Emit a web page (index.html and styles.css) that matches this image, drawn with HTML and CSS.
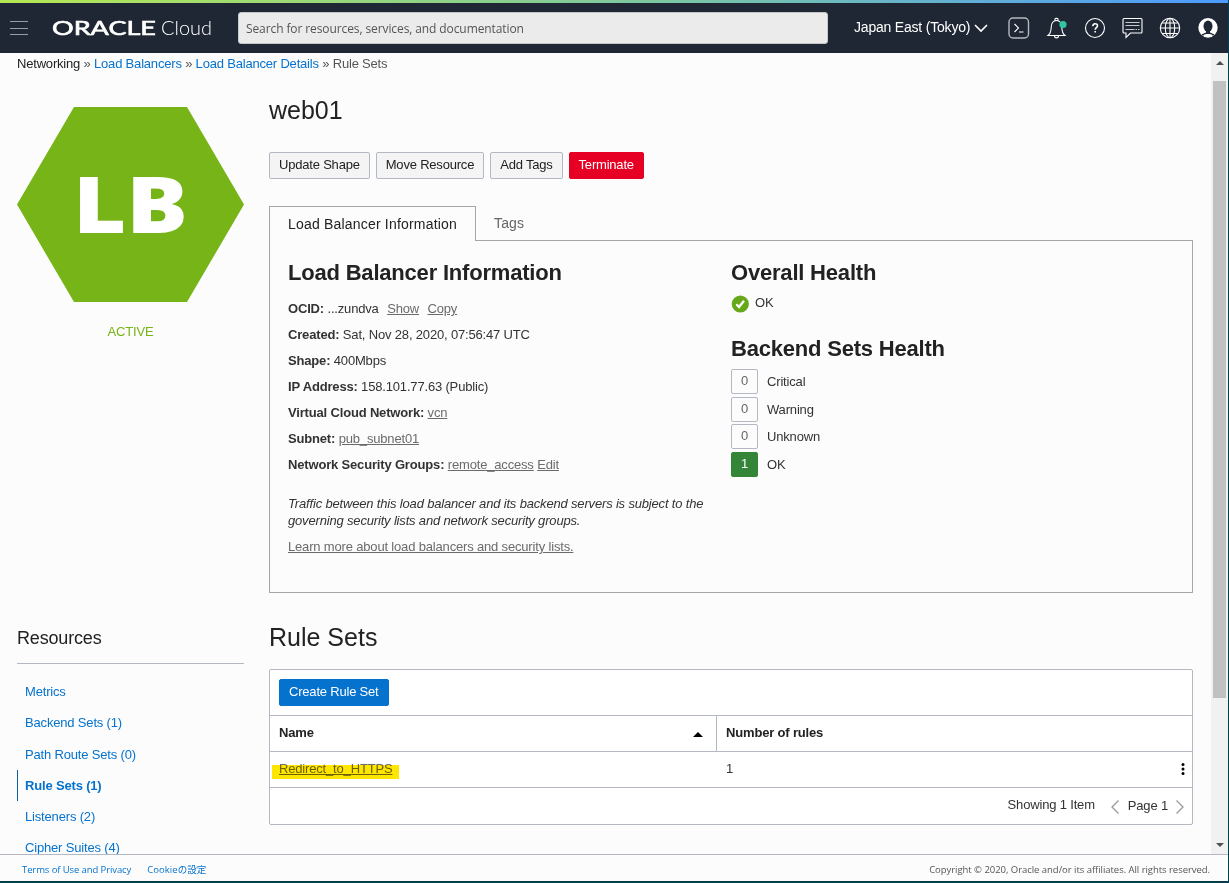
FILE: index.html
```html
<!DOCTYPE html>
<html lang="en">
<head>
    <meta charset="utf-8">
    <title>Rule Sets - Oracle Cloud</title>
    <link rel="stylesheet" href="styles.css">
</head>
<body>
<div class="app">
    <div class="stripe"></div>
    <header class="header">
        <div class="menu"><i></i><i></i><i></i></div>
        <svg class="logo" width="160" height="24" viewBox="0 0 160 24">
            <text class="logo-oracle" x="-1" y="19" textLength="104" lengthAdjust="spacingAndGlyphs">ORACLE</text>
            <text class="logo-cloud" x="108" y="19" textLength="51" lengthAdjust="spacingAndGlyphs">Cloud</text>
        </svg>
        <div class="search">Search for resources, services, and documentation</div>
        <div class="region"><span>Japan East (Tokyo)</span>
            <svg width="14" height="10" viewBox="0 0 14 10"><path d="M1 2l6 6 6-6"/></svg>
        </div>
        <nav class="tools">
            <svg width="22" height="22" viewBox="0 0 22 22">
                <rect class="frame" x="1" y="1" width="19.500" height="20" rx="4"/>
                <path d="M6.500 7l4 4-4 4M11 15h4.500"/>
            </svg>
            <svg width="22" height="22" viewBox="0 0 22 22">
                <path d="M2 18.500c2-1.500 3-3.500 3.200-8 .2-4.500 2-7 5.300-7s5.100 2.500 5.300 7c.2 4.500 1.200 6.500 3.200 8zM9 3.500v-1.500c0-1 3-1 3 0v1.500M8.500 19c0 2.500 4 2.500 4 0"/>
                <circle class="dot" cx="17" cy="7.500" r="3.600"/>
            </svg>
            <svg width="22" height="22" viewBox="0 0 22 22">
                <circle cx="11" cy="11" r="9.500"/>
                <path class="bold" d="M8.800 9.200c0-3.200 4.700-3.200 4.700-.400 0 1.900-2.300 1.900-2.300 4M11.200 14v1.600"/>
            </svg>
            <svg width="22" height="22" viewBox="0 0 22 22">
                <path d="M3 1.500h17q1 0 1 1v12.500q0 1-1 1H9.500l-4.500 4.500v-4.500H3q-1 0-1-1v-12.500q0-1 1-1z"/>
                <path class="soft" d="M4.500 5.500h14M4.500 8.500h14M4.500 12.500h9M14.500 12.500h1.500M17 12.500h1.500"/>
            </svg>
            <svg width="22" height="22" viewBox="0 0 22 22">
                <circle cx="11" cy="11" r="9.700"/>
                <ellipse cx="11" cy="11" rx="4.700" ry="9.700"/>
                <path d="M11 1.500v19M1.500 11h19M3.200 6h15.600M3.200 16.500h15.600"/>
            </svg>
            <svg width="22" height="22" viewBox="0 0 22 22">
                <circle class="white" cx="11" cy="10.800" r="9.700"/>
                <ellipse class="hole" cx="11" cy="9.200" rx="4.500" ry="5.600"/>
                <path class="hole" d="M9 13h4v2.500l4.500 2-1.500 1.500H6l-1.500-1.500 4.500-2z"/>
                <path class="white" d="M6 18.500c1.500-1.200 3-1.500 5-1.500s3.500.3 5 1.500c-2.500 2.500-7.500 2.500-10 0z"/>
            </svg>
        </nav>
    </header>

    <div class="body">
        <div class="content">
            <div class="breadcrumb"><b>Networking</b> » <a>Load Balancers</a> » <a>Load Balancer Details</a> » Rule Sets</div>
            <div class="columns">
                <aside class="sidebar">
                    <svg class="hexagon" width="227" height="195" viewBox="0 0 227 195">
                        <polygon points="57,0 170,0 227,97.500 170,195 57,195 0,97.500"/>
                        <text x="56" y="126" textLength="115" lengthAdjust="spacingAndGlyphs">LB</text>
                    </svg>
                    <div class="state">ACTIVE</div>
                    <h3>Resources</h3>
                    <ul class="resources">
                        <li>Metrics</li>
                        <li>Backend Sets (1)</li>
                        <li>Path Route Sets (0)</li>
                        <li class="current">Rule Sets (1)</li>
                        <li>Listeners (2)</li>
                        <li>Cipher Suites (4)</li>
                    </ul>
                </aside>

                <main class="main">
                    <h1>web01</h1>
                    <div class="actions">
                        <button class="btn">Update Shape</button>
                        <button class="btn">Move Resource</button>
                        <button class="btn">Add Tags</button>
                        <button class="btn danger">Terminate</button>
                    </div>
                    <div class="tabs">
                        <div class="tab active">Load Balancer Information</div>
                        <div class="tab">Tags</div>
                    </div>
                    <div class="panel">
                        <section class="info">
                            <h2>Load Balancer Information</h2>
                            <p class="ocid"><b>OCID:</b> <span>...zundva</span> <a>Show</a> <a>Copy</a></p>
                            <p><b>Created:</b> Sat, Nov 28, 2020, 07:56:47 UTC</p>
                            <p><b>Shape:</b> 400Mbps</p>
                            <p><b>IP Address:</b> 158.101.77.63 (Public)</p>
                            <p><b>Virtual Cloud Network:</b> <a>vcn</a></p>
                            <p><b>Subnet:</b> <a>pub_subnet01</a></p>
                            <p><b>Network Security Groups:</b> <a>remote_access</a> <a>Edit</a></p>
                            <div class="note">Traffic between this load balancer and its backend servers is subject to the<br>governing security lists and network security groups.</div>
                            <div class="learn"><a>Learn more about load balancers and security lists.</a></div>
                        </section>
                        <section class="health">
                            <h2>Overall Health</h2>
                            <div class="overall">
                                <svg width="18" height="18" viewBox="0 0 18 18"><circle cx="9.300" cy="9" r="8.600"/><path d="M5.300 9.300l2.700 2.700 5-6.200"/></svg>
                                <span>OK</span>
                            </div>
                            <h2>Backend Sets Health</h2>
                            <ul class="counts">
                                <li><i>0</i>Critical</li>
                                <li><i>0</i>Warning</li>
                                <li><i>0</i>Unknown</li>
                                <li><i class="ok">1</i>OK</li>
                            </ul>
                        </section>
                    </div>

                    <h1 class="list-title">Rule Sets</h1>
                    <div class="table">
                        <div class="toolbar"><button class="btn primary">Create Rule Set</button></div>
                        <div class="row head">
                            <div class="cell">Name <i class="sort"></i></div>
                            <div class="cell">Number of rules</div>
                        </div>
                        <div class="row">
                            <div class="cell"><a class="marked">Redirect_to_HTTPS</a></div>
                            <div class="cell">1
                                <svg width="4" height="14" viewBox="0 0 4 14"><circle cx="2" cy="2.500" r="1.500"/><circle cx="2" cy="7" r="1.500"/><circle cx="2" cy="11.500" r="1.500"/></svg>
                            </div>
                        </div>
                        <div class="pager">
                            <span class="showing">Showing 1 Item</span>
                            <svg width="8" height="14" viewBox="0 0 8 14"><path d="M7.500.500L1 7l6.500 6.500"/></svg>
                            <span class="page">Page 1</span>
                            <svg width="8" height="14" viewBox="0 0 8 14"><path d="M.500.500L7 7 .500 13.500"/></svg>
                        </div>
                    </div>
                </main>
            </div>
        </div>
        <div class="scrollbar">
            <i class="up"></i>
            <div class="thumb"></div>
            <i class="down"></i>
        </div>
    </div>

    <footer class="footer">
        <a>Terms of Use and Privacy</a>
        <a class="cookie">Cookieの設定</a>
        <span class="copyright">Copyright © 2020, Oracle and/or its affiliates. All rights reserved.</span>
    </footer>
</div>
</body>
</html>
```

FILE: styles.css
```css
* {
    box-sizing: border-box;
}

body {
    margin: 0;
    background: #043f4b;
    font: 13px/20px "Liberation Sans", Arial, sans-serif;
    letter-spacing: -.17px;
    color: #333;
}

h1, h2, h3, p, ul {
    margin: 0;
    padding: 0;
    list-style: none;
}

i {
    font-style: normal;
}

svg {
    display: block;
    flex: none;
}

.app {
    width: 1228px;
    height: 881px;
    overflow: hidden;
    display: flex;
    flex-direction: column;
    background: #fcfcfc;
}

.stripe {
    height: 3px;
    flex: none;
    background: linear-gradient(to right, #b5e853, #7bc6a4 55%, #4c9aff);
}

/* header */
.header {
    height: 50px;
    flex: none;
    display: flex;
    align-items: center;
    padding-left: 10px;
    background: #1e2733;
    color: #fff;
}

.menu {
    width: 18px;
    height: 14px;
    margin-right: 25px;
    display: flex;
    flex-direction: column;
    justify-content: space-between;
}

.menu i {
    height: 1px;
    background: #989b9f;
}

.logo {
    fill: #fff;
    overflow: visible;
    letter-spacing: 0;
}

.logo-oracle {
    font: 400 18.5px Lato, sans-serif;
    stroke: #fff;
    stroke-width: .6;
}

.logo-cloud {
    font: 300 20px Lato, sans-serif;
}

.search {
    width: 590px;
    height: 32px;
    margin-left: 25px;
    padding-left: 7px;
    border: 1px solid #c4c8cc;
    border-radius: 3px;
    background: #ebebeb;
    color: #555;
    font: 12px/31px "Open Sans", sans-serif;
    letter-spacing: -.1px;
}

.region {
    display: flex;
    align-items: center;
    gap: 4px;
    width: 134px;
    margin-left: 26px;
    font-size: 14px;
    letter-spacing: -.2px;
    white-space: nowrap;
}

.region span {
    margin-top: -2px;
}

.region svg, .tools svg {
    fill: none;
    stroke: #fff;
    stroke-width: 1.1;
}

.region svg {
    stroke-width: 1.6;
}

.tools {
    display: flex;
    gap: 15.8px;
    margin-left: 20px;
}

.tools .frame {
    stroke: #b6b9bd;
    stroke-width: 1.4;
}

.tools .bold {
    stroke-width: 1.6;
}

.tools .soft {
    stroke: #c6c9cd;
}

.tools .dot {
    fill: #30c5a0;
    stroke: none;
}

.tools .white {
    fill: #fff;
    stroke: none;
}

.tools .hole {
    fill: #1e2733;
    stroke: none;
}

/* page body */
.body {
    height: 801px;
    flex: none;
    display: flex;
}

.content {
    width: 1211px;
    overflow: hidden;
}

.scrollbar {
    width: 17px;
    padding: 8px 2px 7px;
    display: flex;
    flex-direction: column;
    align-items: center;
    background: #f1f1f1;
}

.scrollbar i {
    border: 4px solid transparent;
}

.scrollbar .up {
    border-top: 0;
    border-bottom-color: #505050;
}

.scrollbar .down {
    margin-top: auto;
    border-bottom: 0;
    border-top-color: #505050;
}

.thumb {
    width: 13px;
    height: 617px;
    margin-top: 16px;
    background: #c1c1c1;
}

.breadcrumb {
    height: 20px;
    padding-left: 17px;
    line-height: 22px;
    letter-spacing: -.19px;
    color: #555;
}

.breadcrumb b {
    font-weight: normal;
    color: #222;
}

.breadcrumb a, .footer a, .resources {
    color: #0572ce;
}

.columns {
    display: flex;
    gap: 25px;
    padding-left: 17px;
}

/* sidebar */
.sidebar {
    width: 227px;
}

.hexagon {
    margin-top: 34px;
    fill: #76b417;
}

.hexagon text {
    fill: #fff;
    font: 900 78px "Open Sans", sans-serif;
    letter-spacing: 0;
}

.state {
    margin-top: 20px;
    text-align: center;
    color: #76b417;
}

.sidebar h3 {
    margin-top: 284px;
    padding-bottom: 13px;
    border-bottom: 1px solid #b3b8c2;
    font-size: 18px;
    font-weight: normal;
    line-height: 24px;
    color: #222;
}

.resources {
    padding-top: 12px;
}

.resources li {
    height: 31.3px;
    padding-left: 8px;
    line-height: 31px;
}

.resources .current {
    padding-left: 7px;
    border-left: 1px solid #0f5fa6;
    font-weight: bold;
}

/* main column */
.main {
    width: 924px;
    padding-top: 22px;
}

.main h1 {
    font-size: 25px;
    font-weight: normal;
    line-height: 30px;
    letter-spacing: 0;
    color: #222;
}

.actions {
    display: flex;
    gap: 6px;
    margin-top: 27px;
}

.btn {
    height: 27px;
    padding: 0 9px 2px;
    border: 1px solid #b3b8c2;
    border-radius: 2px;
    background: #f4f4f4;
    font: 13px/22px "Liberation Sans", Arial, sans-serif;
    letter-spacing: -.2px;
    color: #222;
    white-space: nowrap;
}

.btn.danger {
    border-color: #e60023;
    background: #e60023;
    color: #fff;
}

.btn.primary {
    border-color: #0572ce;
    background: #0572ce;
    color: #fff;
}

.tabs {
    display: flex;
    height: 34px;
    margin-top: 27px;
    font-size: 14px;
    line-height: 34px;
    letter-spacing: .15px;
}

.tab {
    padding: 0 18px;
    color: #666;
}

.tab.active {
    width: 207px;
    height: 35px;
    position: relative;
    border: 1px solid #a6a6a6;
    border-bottom: 0;
    background: #fcfcfc;
    color: #222;
    letter-spacing: .19px;
    white-space: nowrap;
}

.panel {
    height: 353px;
    display: flex;
    padding: 18px 18px 0;
    border: 1px solid #a6a6a6;
}

.panel h2 {
    font-size: 22px;
    line-height: 28px;
    letter-spacing: -.2px;
    color: #222;
}

.panel a, .row a {
    color: #6b6b6b;
    text-decoration: underline;
}

.info {
    width: 443px;
}

.info p {
    line-height: 26px;
}

.info .ocid {
    margin-top: 9px;
}

.ocid a {
    margin-left: 5px;
}

.note {
    margin-top: 17px;
    font-style: italic;
    line-height: 17px;
    white-space: nowrap;
}

.learn {
    margin-top: 9px;
    line-height: 17px;
}

.overall {
    display: flex;
    align-items: center;
    gap: 6px;
    height: 18px;
    margin: 8px 0 22px;
}

.overall span {
    margin-top: -2px;
}

.overall svg {
    fill: #67a81a;
}

.overall path {
    fill: none;
    stroke: #fff;
    stroke-width: 2.2;
}

.counts {
    margin-top: 6px;
}

.counts li {
    display: flex;
    height: 27.7px;
    line-height: 25px;
}

.counts i {
    width: 27px;
    height: 25px;
    margin-right: 9px;
    border: 1px solid #b3b8c2;
    border-radius: 2px;
    line-height: 22px;
    text-align: center;
    color: #666;
}

.counts .ok {
    border-color: #348537;
    background: #348537;
    color: #fff;
}

/* rule set table */
.main .list-title {
    margin-top: 29px;
}

.table {
    height: 156px;
    margin-top: 17px;
    border: 1px solid #b3b8c2;
    border-radius: 2px;
    background: #fff;
}

.toolbar {
    height: 46px;
    padding: 9px;
    border-bottom: 1px solid #b3b8c2;
}

.row {
    display: flex;
    height: 36px;
    border-bottom: 1px solid #b3b8c2;
    line-height: 34px;
}

.row .cell {
    display: flex;
    width: 446px;
    padding: 0 9px;
}

.row .cell + .cell {
    width: 476px;
    padding-left: 10px;
}

.head {
    font-weight: bold;
    color: #222;
}

.head .cell + .cell {
    padding-left: 9px;
    border-left: 1px solid #b3b8c2;
}

.sort {
    align-self: center;
    margin: 1px 4px 0 auto;
    border: 4px solid transparent;
    border-width: 0 5px 5px;
    border-bottom-color: #000;
}

.row svg {
    margin: 10px -2px 0 auto;
    fill: #000;
}

/* yellow marker stroke over the link */
.marked {
    position: relative;
}

.marked::after {
    content: "";
    position: absolute;
    left: -7px;
    right: -7px;
    top: 13px;
    height: 14px;
    background: #ffe600;
    mix-blend-mode: multiply;
}

.pager {
    display: flex;
    align-items: center;
    justify-content: flex-end;
    height: 36px;
    padding-right: 8px;
}

.pager svg {
    margin-top: 1px;
    fill: none;
    stroke: #999;
    stroke-width: 1.3;
}

.showing {
    margin: -2px 16px 0 0;
}

.page {
    margin: 0 8px 0 9px;
}

.footer {
    flex: 1;
    display: flex;
    padding: 0 18px 0 22px;
    border-top: 1px solid #b3b8c2;
    font: 9.5px/29px "Open Sans", "Noto Sans CJK JP", sans-serif;
    letter-spacing: -.1px;
}

.cookie {
    margin-left: 16px;
    letter-spacing: .05px;
}

.copyright {
    margin-left: auto;
    letter-spacing: -.04px;
    color: #555;
}
```
